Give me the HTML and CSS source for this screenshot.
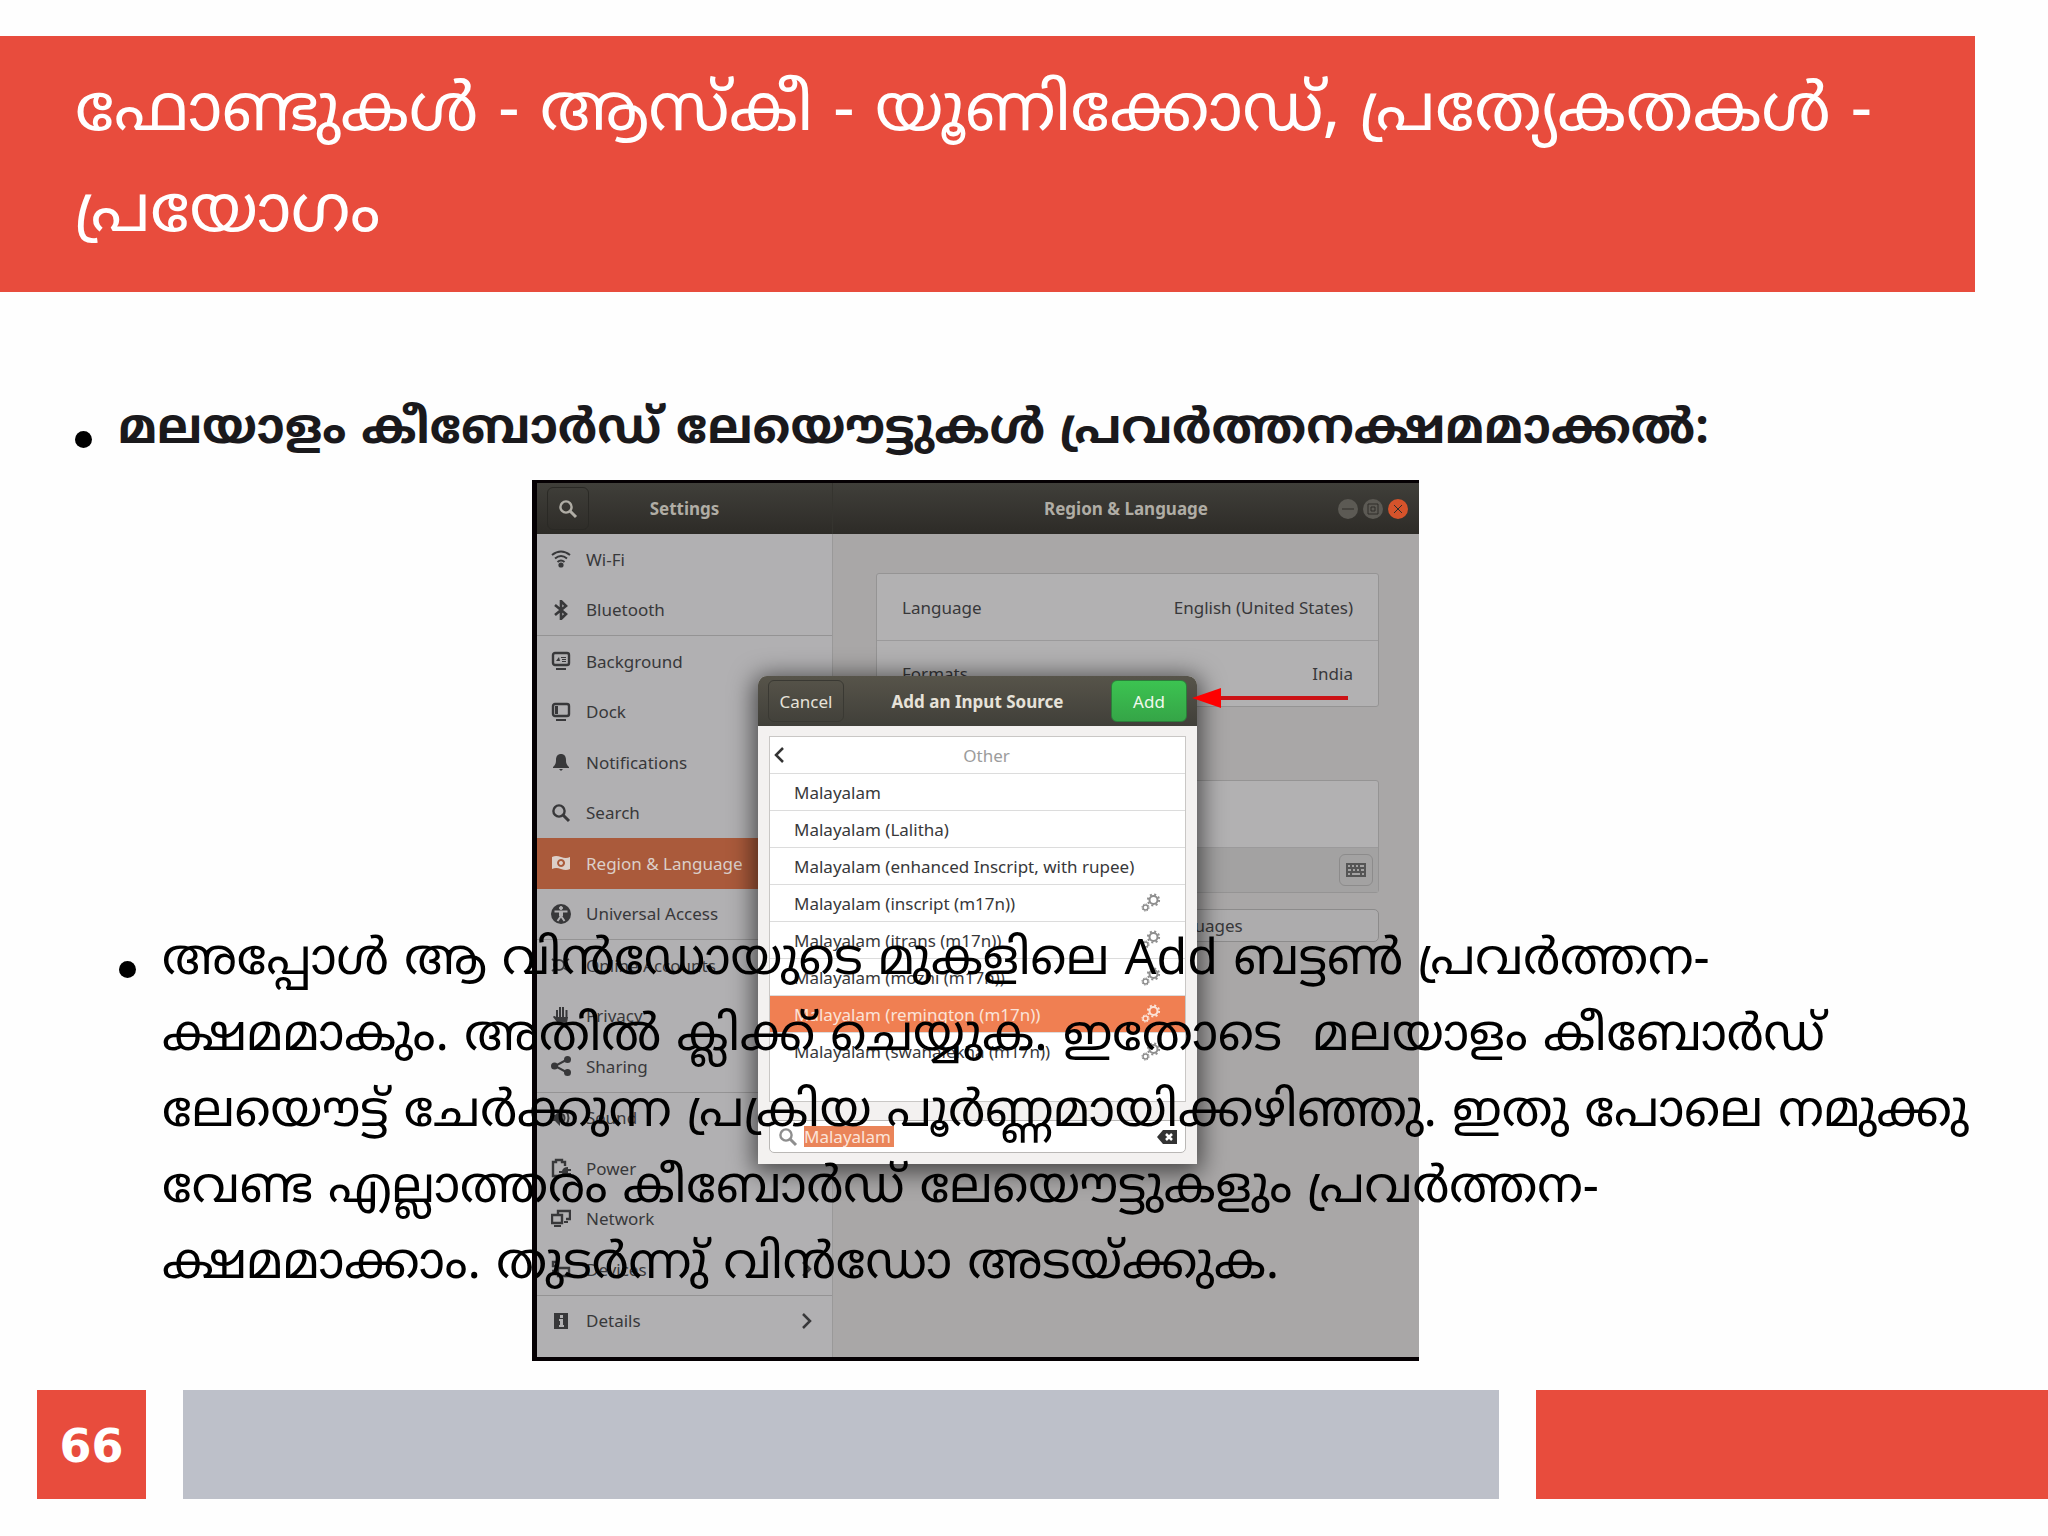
FILE: index.html
```
<!DOCTYPE html>
<html lang="ml">
<head>
    <meta charset="UTF-8">
    <meta name="viewport" content="width=device-width, initial-scale=1.0">
    <title>ഫോണ്ടുകൾ - ആസ്കീ - യൂണിക്കോഡ്</title>
    <link rel="stylesheet" href="styles.css">
</head>
<body>

<!-- Shared icons -->
<svg class="sprite" aria-hidden="true">
    <symbol id="i-search" viewBox="0 0 20 20"><circle cx="8" cy="8" r="5.6" fill="none" stroke="currentColor" stroke-width="2.4"/><path d="M12 12l6 6" stroke="currentColor" stroke-width="3"/></symbol>
    <symbol id="i-gears" viewBox="0 0 20 20"><g fill="none" stroke="currentColor"><circle cx="12.500" cy="7" r="4" stroke-width="2"/><circle cx="12.500" cy="7" r="5.600" stroke-width="2" stroke-dasharray="2 2.400"/><circle cx="4.500" cy="14.500" r="2.500" stroke-width="1.500"/><circle cx="4.500" cy="14.500" r="3.600" stroke-width="1" stroke-dasharray="1.400 1.400"/></g></symbol>
    <symbol id="i-next" viewBox="0 0 20 20"><path d="M6 3l7 7-7 7" fill="none" stroke="currentColor" stroke-width="2.5"/></symbol>
</svg>

<div class="slide">
    <header class="title">
        <h1>ഫോണ്ടുകൾ - ആസ്കീ - യൂണിക്കോഡ്, പ്രത്യേകതകൾ -<br>പ്രയോഗം</h1>
    </header>

    <main class="stage">
        <!-- Settings window -->
        <div class="window">
            <div class="window-bar">
                <div class="bar-side">
                    <button class="bar-search" aria-label="Search"><svg><use href="#i-search"/></svg></button>
                    <span class="bar-title">Settings</span>
                </div>
                <div class="bar-main">
                    <span class="bar-title">Region &amp; Language</span>
                    <div class="controls">
                        <button aria-label="Minimize"><svg viewBox="0 0 20 20"><path d="M4 10h12"/></svg></button>
                        <button aria-label="Maximize"><svg viewBox="0 0 20 20"><path d="M5 5h10v10H5zM8 8h4v4H8z"/></svg></button>
                        <button class="close" aria-label="Close"><svg viewBox="0 0 20 20"><path d="M6 6l8 8M14 6l-8 8"/></svg></button>
                    </div>
                </div>
            </div>

            <div class="window-body">
                <nav class="sidebar">
                    <a href="#"><svg viewBox="0 0 20 20"><g fill="none" stroke="currentColor" stroke-width="2"><path d="M1 6q9-7 18 0M4 9.500q6-5 12 0M6.500 13q3.500-3 7 0"/></g><circle cx="10" cy="16" r="2.600"/></svg>Wi-Fi</a>
                    <a href="#" class="group-end"><svg viewBox="0 0 20 20"><path d="M4 5l11 9-5 5V1l5 5-11 9" fill="none" stroke="currentColor" stroke-width="2.600"/></svg>Bluetooth</a>
                    <a href="#"><svg viewBox="0 0 20 20"><rect x="2" y="2" width="16" height="12" rx="2" fill="none" stroke="currentColor" stroke-width="2.400"/><path d="M5 17h10v2H5zM5 10l3-4 1 4zM10 6h5v1h-5zM11 8h4v1h-4zM11 10h4v1h-4z"/></svg>Background</a>
                    <a href="#"><svg viewBox="0 0 20 20"><rect x="2" y="2" width="16" height="12" rx="2" fill="none" stroke="currentColor" stroke-width="2.400"/><path d="M5 17h10v2H5zM4 4h3v8H4z"/></svg>Dock</a>
                    <a href="#"><svg viewBox="0 0 20 20"><path d="M10 2c3 0 5 2 5 6 0 4 1 5 3 7v1H2v-1c2-2 3-3 3-7 0-4 2-6 5-6zM8 17h4l-2 2z"/></svg>Notifications</a>
                    <a href="#"><svg><use href="#i-search"/></svg>Search</a>
                    <a href="#" class="active"><svg viewBox="0 0 20 20"><path fill-rule="evenodd" d="M1 4q4-2 9 0t9 0v12q-4 2-9 0t-9 0zM10 6a4 4 0 1 0 .1 0zM10 8a2 2 0 1 1-.1 0z"/></svg>Region &amp; Language</a>
                    <a href="#" class="group-end"><svg viewBox="0 0 20 20"><circle cx="10" cy="10" r="10"/><g fill="#b1b0b2" stroke="#b1b0b2"><circle cx="10" cy="4" r="1.500"/><path d="M3.500 7.500h13M10 7v5l-3.500 5M10 12l3.500 5" fill="none" stroke-width="2"/><path d="M8.500 8h3v4h-3z"/></g></svg>Universal Access</a>
                    <a href="#"><svg viewBox="0 0 20 20"><g fill="none" stroke="currentColor" stroke-width="2"><circle cx="8" cy="10" r="5"/><path d="M1 4l4 3M1 16l4-3M13 7l5-3M13 13l5 3"/></g></svg>Online Accounts</a>
                    <a href="#"><svg viewBox="0 0 20 20"><path d="M5 11h12l-1 6q-1 2-5 2-3 0-5-3L2 11q1-2 3 0z"/><path d="M6 12V4M9 12V1M12 12V1M15.500 12V4" stroke="currentColor" stroke-width="2"/></svg>Privacy</a>
                    <a href="#" class="group-end"><svg viewBox="0 0 20 20"><path d="M17 3L4 10l13 7" fill="none" stroke="currentColor" stroke-width="2"/><circle cx="16.500" cy="3.500" r="3.500"/><circle cx="3.500" cy="10" r="3.500"/><circle cx="16.500" cy="16.500" r="3.500"/></svg>Sharing</a>
                    <a href="#"><svg viewBox="0 0 20 20"><path d="M1 7h3l5-5v16l-5-5H1z"/><path d="M12 6q3 4 0 8M15 3q5 7 0 14" fill="none" stroke="currentColor" stroke-width="2"/></svg>Sound</a>
                    <a href="#"><svg viewBox="0 0 20 20"><path d="M8 18H2V4h3V2h6v2h3v4" fill="none" stroke="currentColor" stroke-width="2.400"/><path d="M8 13h3q1-4 6-4v2h3v2h-3v2h3v2h-3v2q-5 0-6-4H8z"/></svg>Power</a>
                    <a href="#"><svg viewBox="0 0 20 20"><path d="M7 5V2h12v8h-4M1 6h10v8H1z" fill="none" stroke="currentColor" stroke-width="2.400"/><path d="M3 16h7v2H3zM13 12h4v2h-4z"/></svg>Network</a>
                    <a href="#" class="group-end"><svg viewBox="0 0 20 20"><path d="M2 3h5v4H2zM7 9h11v8H7zM1 12h4M1 15h4" fill="none" stroke="currentColor" stroke-width="2.400"/></svg>Devices<svg class="next"><use href="#i-next"/></svg></a>
                    <a href="#"><svg viewBox="0 0 20 20"><path fill-rule="evenodd" d="M3 2h14v16H3zM9 4v3h3V4zM8 8v2h1v4H8v2h5v-2h-1V8z"/></svg>Details<svg class="next"><use href="#i-next"/></svg></a>
                </nav>

                <section class="panel">
                    <dl class="card">
                        <div><dt>Language</dt><dd>English (United States)</dd></div>
                        <div><dt>Formats</dt><dd>India</dd></div>
                    </dl>
                    <div class="card sources">
                        <div></div>
                        <div class="tools">
                            <button aria-label="Keyboard layout"><svg viewBox="0 0 20 16"><path fill-rule="evenodd" d="M0 1h20v14H0zM2 3v2h2V3zM6 3v2h2V3zM10 3v2h2V3zM14 3v2h4V3zM2 7v2h3V7zM7 7v2h2V7zM11 7v2h2V7zM15 7v2h3V7zM2 11v2h2v-2zM6 11v2h8v-2zM16 11v2h2v-2z"/></svg></button>
                        </div>
                    </div>
                    <button class="manage">Manage Installed Languages</button>
                </section>
            </div>

            <!-- Add input source dialog -->
            <div class="dialog" role="dialog" aria-label="Add an Input Source">
                <div class="dialog-bar">
                    <button class="cancel">Cancel</button>
                    <span>Add an Input Source</span>
                    <button class="add">Add</button>
                </div>
                <div class="dialog-body">
                    <ul class="layouts">
                        <li class="other"><svg viewBox="0 0 20 20"><path d="M13 3l-7 7 7 7" fill="none" stroke="currentColor" stroke-width="2.500"/></svg>Other</li>
                        <li>Malayalam</li>
                        <li>Malayalam (Lalitha)</li>
                        <li>Malayalam (enhanced Inscript, with rupee)</li>
                        <li>Malayalam (inscript (m17n))<svg><use href="#i-gears"/></svg></li>
                        <li>Malayalam (itrans (m17n))<svg><use href="#i-gears"/></svg></li>
                        <li>Malayalam (mozhi (m17n))<svg><use href="#i-gears"/></svg></li>
                        <li class="selected">Malayalam (remington (m17n))<svg><use href="#i-gears"/></svg></li>
                        <li>Malayalam (swanalekha (m17n))<svg><use href="#i-gears"/></svg></li>
                    </ul>
                    <div class="search">
                        <svg><use href="#i-search"/></svg>
                        <input type="text" value="Malayalam" size="8" aria-label="Search layouts">
                        <svg class="clear" viewBox="0 0 20 16"><path d="M0 8l6-7h14v14H6z"/><path d="M9 5l6 6M15 5l-6 6" stroke="#fff" stroke-width="2.500"/></svg>
                    </div>
                </div>
            </div>

            <svg class="arrow" viewBox="0 0 158 20"><path d="M28 10h128" stroke="#cc1216" stroke-width="4"/><path d="M0 10L29 0v20z" fill="#fe0000"/></svg>
        </div>

        <!-- Slide text, runs over the window -->
        <ul class="points">
            <li class="lead">മലയാളം കീബോർഡ് ലേയൌട്ടുകൾ പ്രവർത്തനക്ഷമമാക്കൽ:</li>
            <li class="detail">അപ്പോൾ ആ വിൻഡോയുടെ മുകളിലെ Add ബട്ടൺ പ്രവർത്തന-<br>ക്ഷമമാകും. അതിൽ ക്ലിക്ക് ചെയ്യുക. ഇതോടെ&nbsp; മലയാളം കീബോർഡ്<br>ലേയൌട്ട് ചേർക്കുന്ന പ്രക്രിയ പൂർണ്ണമായിക്കഴിഞ്ഞു. ഇതു പോലെ നമുക്കു<br>വേണ്ട എല്ലാത്തരം കീബോർഡ് ലേയൌട്ടുകളും പ്രവർത്തന-<br>ക്ഷമമാക്കാം. തുടർന്നു് വിൻഡോ അടയ്ക്കുക.</li>
        </ul>
    </main>

    <footer class="footer">
        <span class="page">66</span>
        <span class="strip"></span>
        <span class="block"></span>
    </footer>
</div>

</body>
</html>
```
FILE: styles.css
```
* {
    box-sizing: border-box;
}

body {
    margin: 0;
    background-color: #fefefe;
    color: #000;
    font-family: "Noto Sans Malayalam", "Noto Sans", sans-serif;
}

button {
    padding: 0;
    border: none;
    background: none;
    color: inherit;
    font: inherit;
}

ul, dl, dd, h1 {
    margin: 0;
    padding: 0;
    list-style: none;
}

svg {
    width: 20px;
    height: 20px;
    flex: none;
    fill: currentColor;
}

.sprite {
    position: absolute;
    width: 0;
    height: 0;
}

.slide {
    display: flex;
    flex-direction: column;
    min-height: 100vh;
    padding: 36px 0 37px;
}

.title {
    height: 256px;
    margin-right: 73px;
    padding: 28px 75px 0;
    background-color: #e84c3d;
    color: #fff;
}

.title h1 {
    font-size: 66px;
    font-weight: normal;
    line-height: 101px;
    white-space: nowrap;
}

/* Window and text share one grid cell */
.stage {
    display: grid;
    align-items: start;
}

.window, .points {
    grid-area: 1 / 1;
}

.window {
    position: relative;
    height: 881px;
    margin: 188px 629px 0 532px;
    display: flex;
    flex-direction: column;
    border: solid #050003;
    border-width: 3px 0 4px 5px;
    background-color: #a9a7a7;
    color: #38383a;
    font-family: "Noto Sans", sans-serif;
    font-size: 17px;
}

.window-bar {
    display: flex;
    height: 51px;
    background: linear-gradient(#403f3a, #2d2b27);
    color: #b0ada5;
    font-weight: bold;
}

.bar-side, .bar-main {
    display: flex;
    align-items: center;
    justify-content: center;
    position: relative;
}

.bar-side {
    width: 296px;
    border-right: 1px solid #35342f;
}

.bar-main {
    flex: 1;
}

.bar-search {
    position: absolute;
    left: 10px;
    top: 4px;
    width: 42px;
    height: 43px;
    border: 1px solid #2a2925;
    border-radius: 6px;
    display: flex;
    align-items: center;
    justify-content: center;
}

.controls {
    position: absolute;
    right: 11px;
    display: flex;
    gap: 5px;
}

.controls button {
    height: 20px;
    border-radius: 50%;
    background-color: #5c5a54;
    color: #2e2d29;
}

.controls .close {
    background-color: #d5532b;
}

.controls svg {
    display: block;
    fill: none;
    stroke: currentColor;
}

.window-body {
    flex: 1;
    display: flex;
}

.sidebar {
    width: 296px;
    padding-bottom: 11px;
    display: flex;
    flex-direction: column;
    border-right: 1px solid #9a9999;
    background-color: #b1b0b2;
}

.sidebar a {
    flex: 1;
    display: flex;
    align-items: center;
    gap: 15px;
    padding: 0 15px 0 14px;
    color: inherit;
    text-decoration: none;
}

.sidebar .group-end {
    border-bottom: 1px solid #949394;
}

.sidebar .active {
    background-color: #aa5a3b;
    color: #dccfc9;
}

.next {
    margin-left: auto;
}

.panel {
    flex: 1;
    padding: 39px 40px 0 43px;
}

.card {
    border: 1px solid #959494;
    border-radius: 3px;
    background-color: #b2b1b2;
}

.card > div {
    display: flex;
    align-items: center;
    justify-content: space-between;
    height: 66px;
    padding: 0 25px;
}

.card > div + div {
    border-top: 1px solid #9b9a9b;
}

.sources {
    margin-top: 73px;
}

.sources .tools {
    height: 45px;
    padding: 0 5px;
    justify-content: flex-end;
    background-color: #a3a2a2;
}

.tools button {
    width: 34px;
    height: 32px;
    border: 1px solid #8c8b8b;
    border-radius: 6px;
    color: #555;
}

.tools svg {
    display: block;
    margin: auto;
}

.manage {
    width: 100%;
    height: 33px;
    margin-top: 16px;
    border: 1px solid #8c8b8b;
    border-radius: 5px;
    background-color: #adacad;
}

.dialog {
    position: absolute;
    top: 193px;
    left: 221px;
    width: 439px;
    height: 488px;
    border-radius: 9px 9px 0 0;
    background-color: #f3f1f0;
    box-shadow: 0 4px 24px 4px rgba(0, 0, 0, 0.6);
}

.dialog-bar {
    height: 50px;
    padding: 0 10px;
    display: flex;
    align-items: center;
    justify-content: space-between;
    border-radius: 9px 9px 0 0;
    background: linear-gradient(#57544a, #403f39);
    color: #e6e2d9;
    font-weight: bold;
}

.dialog-bar button {
    width: 76px;
    height: 42px;
    border: 1px solid #3a3933;
    border-radius: 6px;
    font-weight: normal;
}

.dialog-bar .add {
    border-color: #2b7f3a;
    background: linear-gradient(#3cc351, #35a547);
    color: #f1f8ee;
}

.dialog-body {
    padding: 10px 11px;
}

.layouts {
    height: 366px;
    border: 1px solid #c9c7c5;
    background-color: #fff;
}

.layouts li {
    display: flex;
    align-items: center;
    justify-content: space-between;
    height: 37px;
    padding: 0 24px;
    border-bottom: 1px solid #dcdcdc;
}

.layouts li:last-child {
    border-bottom: none;
}

.layouts svg {
    color: #8e8e8e;
}

.layouts .other {
    position: relative;
    justify-content: center;
    padding-left: 42px;
    color: #9c9c9c;
}

.layouts .other svg {
    position: absolute;
    left: 0;
    color: #333;
}

.layouts .selected, .layouts .selected svg {
    background-color: #f07f52;
    color: #fbe3d8;
}

.search {
    display: flex;
    align-items: center;
    gap: 6px;
    height: 33px;
    margin-top: 18px;
    padding: 0 8px;
    border: 1px solid #bab8b6;
    border-radius: 5px;
    background-color: #fff;
}

.search svg {
    color: #8e8e8e;
}

.search input {
    width: 90px;
    height: 21px;
    padding: 0;
    border: none;
    background-color: #ea8459;
    color: #fbe3d8;
    font: inherit;
}

.search .clear {
    margin-left: auto;
    color: #333;
}

.arrow {
    position: absolute;
    top: 205px;
    left: 655px;
    width: 158px;
    height: 20px;
}

.points {
    z-index: 1;
    padding-top: 102px;
    line-height: 76px;
    white-space: nowrap;
}

.points li::before {
    content: "";
    position: absolute;
    width: 17px;
    height: 17px;
    margin: 37px 0 0 -43px;
    border-radius: 50%;
    background-color: #000;
}

.lead {
    padding-left: 118px;
    color: #1a191c;
    font-size: 48px;
    font-weight: bold;
}

.detail {
    margin-top: 454px;
    padding-left: 162px;
    font-size: 50px;
}

.footer {
    display: flex;
    gap: 37px;
    height: 109px;
    margin-top: auto;
    padding-left: 37px;
}

.footer span {
    background-color: #e84c3d;
}

.footer .page {
    width: 109px;
    color: #fff;
    font-family: "DejaVu Sans", sans-serif;
    font-size: 46px;
    font-weight: bold;
    line-height: 112px;
    text-align: center;
}

.footer .strip {
    flex: 18;
    background-color: #bdc0c9;
}

.footer .block {
    flex: 7;
}
```
